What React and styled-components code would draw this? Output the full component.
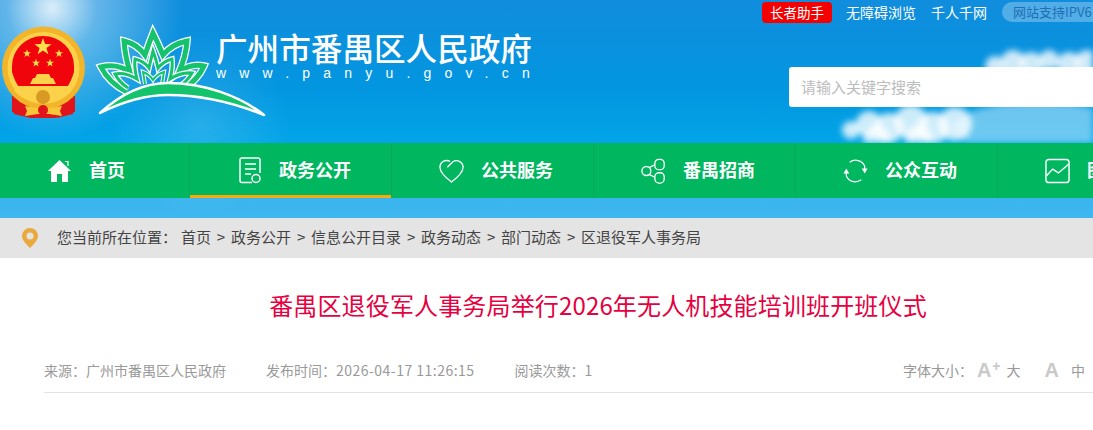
import React from "react";
import styled, { createGlobalStyle } from "styled-components";

const FONT = `"Noto Sans CJK SC", "Noto Sans", sans-serif`;

const GlobalStyle = createGlobalStyle`
  html, body {
    margin: 0;
    padding: 0;
    background: #fff;
    overflow: hidden;
  }
  body {
    font-family: ${FONT};
  }
`;

const Page = styled.div`
  width: 1093px;
  height: 430px;
  overflow: hidden;
`;

const Banner = styled.div`
  position: relative;
  height: 218px;
  overflow: hidden;
  background:
    radial-gradient(circle at 52px 8px, rgba(255, 255, 255, 0.85) 0, rgba(255, 255, 255, 0.35) 45px, rgba(255, 255, 255, 0) 130px),
    radial-gradient(circle at 200px 125px, rgba(255, 255, 255, 0.14) 0, rgba(255, 255, 255, 0) 90px),
    linear-gradient(180deg, #118ddd 0, #0296e0 90px, #03a5e8 143px, #3ab5ee 198px, #3fb6ef 218px);
`;

const Clouds = styled.svg`
  position: absolute;
  right: 0;
  top: 0;
  filter: blur(3px);
`;

const Head = styled.header`
  position: relative;
  display: flex;
  height: 143px;
`;

const Brand = styled.div`
  display: flex;
  align-items: flex-start;
  padding-top: 26px;
  flex: none;
  width: 762px;
  box-sizing: border-box;
`;

const TitleBlock = styled.div`
  margin-left: -51px;
  padding-top: 3px;
  color: #fff;
`;

const SiteName = styled.div`
  font-size: 31.6px;
  line-height: 36px;
  font-weight: 500;
  white-space: nowrap;
`;

const SiteUrl = styled.div`
  font-family: "Liberation Sans", sans-serif;
  font-size: 14px;
  line-height: 16px;
  letter-spacing: 13.2px;
  white-space: nowrap;
`;

const HeadRight = styled.div`
  flex: 1;
  display: flex;
  flex-direction: column;
  align-items: flex-start;
  padding-top: 2px;
  min-width: 0;
`;

const Tools = styled.div`
  display: flex;
  align-items: center;
  white-space: nowrap;
  height: 21px;
`;

const ElderButton = styled.span`
  width: 70px;
  height: 21px;
  line-height: 21px;
  text-align: center;
  background: #f40000;
  color: #fff;
  font-size: 13.5px;
  border-radius: 4px;
  margin-right: 14px;
`;

const ToolLink = styled.span`
  color: #fff;
  font-size: 14px;
  line-height: 21px;
  margin-right: 15px;
`;

const Ipv6 = styled.span`
  height: 20px;
  line-height: 20px;
  padding: 0 12px 0 11px;
  margin-top: -1px;
  background: rgba(255, 255, 255, 0.28);
  color: #1f6fb5;
  font-size: 13px;
  border-radius: 10px 0 0 10px;
`;

const SearchBox = styled.div`
  margin: 44px 0 0 27px;
  width: 320px;
  height: 40px;
  line-height: 40px;
  padding-left: 12px;
  box-sizing: border-box;
  background: #fff;
  border-radius: 3px;
  color: #bcbcbc;
  font-size: 15px;
`;

const Nav = styled.nav`
  position: relative;
  display: flex;
  height: 55px;
  background: #00b75f;
`;

const NavItem = styled.div`
  flex: none;
  box-sizing: border-box;
  width: ${({ $first }) => ($first ? "190px" : "202px")};
  display: flex;
  align-items: center;
  padding-left: 47px;
  border-right: 1px solid #0aa958;
  color: #fff;
  font-size: 18px;
  font-weight: 700;
  white-space: nowrap;
  ${({ $active }) => $active && `box-shadow: inset 0 -3px 0 #f7a90d;`}
`;

const NavIcon = styled.span`
  flex: none;
  width: 25px;
  height: 26px;
  margin-right: 17px;
  display: flex;
  align-items: center;
  justify-content: center;
`;

const NavLabel = styled.span`
  margin-top: -4px;
`;

const Crumb = styled.div`
  display: flex;
  align-items: center;
  height: 40px;
  padding-left: 22px;
  background: #e4e4e4;
  color: #444;
  font-size: 15px;
  white-space: nowrap;
`;

const PinIcon = styled.svg`
  flex: none;
  margin-right: 19px;
`;

const CrumbTrail = styled.div`
  display: flex;
  margin-top: -3px;
`;

const CrumbLabel = styled.span`
  margin-right: 4px;
`;

const CrumbSep = styled.span`
  width: 20px;
  text-align: center;
`;

const Article = styled.main`
  width: 1108px;
  margin-left: 44px;
`;

const Title = styled.h1`
  margin: 32px 0 0;
  font-size: 24px;
  line-height: 30px;
  font-weight: 400;
  letter-spacing: 0.15px;
  text-align: center;
  color: #e5003f;
  white-space: nowrap;
`;

const Meta = styled.div`
  display: flex;
  align-items: center;
  height: 40px;
  padding-bottom: 2px;
  margin-top: 30px;
  border-bottom: 1px solid #e4e4e4;
  color: #999;
  font-size: 14px;
  white-space: nowrap;
`;

const MetaItem = styled.span`
  margin-right: 40px;
`;

const MetaNumber = styled.span`
  letter-spacing: 0.48px;
`;

const FontSizer = styled.div`
  display: flex;
  align-items: center;
  margin-left: auto;
  margin-right: 67px;
`;

const SizeGlyph = styled.span`
  font-family: "Liberation Sans", sans-serif;
  font-weight: 700;
  font-size: 20px;
  line-height: 20px;
  color: #c9c9c9;
  margin: 0 ${({ $after }) => $after}px 0 ${({ $before }) => $before}px;
`;

const SizePlus = styled.sup`
  font-size: 14px;
  line-height: 0;
  margin-left: 1px;
  vertical-align: 6px;
`;

const Star = ({ cx, cy, r }) => {
  const pts = [];
  for (let i = 0; i < 10; i++) {
    const rad = i % 2 ? r * 0.4 : r;
    const a = (Math.PI / 5) * i - Math.PI / 2;
    pts.push(`${cx + rad * Math.cos(a)},${cy + rad * Math.sin(a)}`);
  }
  return <polygon points={pts.join(" ")} fill="#ffe14a" />;
};

const Emblem = () => (
  <svg width="95" height="95" viewBox="0 26 95 95" style={{ flex: "none" }}>
    <path d="M12 96 L12 112 L26 114 L30 118 L56 118 L60 114 L75 112 L75 96 Z" fill="#e0141a" />
    <circle cx="43.5" cy="68" r="41.5" fill="#f2b52a" />
    <circle cx="43.5" cy="68" r="36" fill="#fbd24a" />
    <path d="M12 66 A31 30 0 0 1 74 66 L74 72 C72 78 70 84 66 88 L20 88 C16 84 14 78 12 72 Z" fill="#f0050d" />
    <path d="M30 84 L33 78 H35 L37 74 H49 L51 78 H53 L56 84 Z" fill="#fbd24a" />
    <path d="M16 86 H71 L72 90 C66 98 60 100 43 100 C26 100 20 98 14 90 Z" fill="#fbd24a" />
    <path d="M12 98 C18 106 26 108 30 109 L30 118 L14 114 Z M75 98 C69 106 61 108 57 109 L57 118 L73 114 Z" fill="#e0141a" />
    <path d="M25 106 L38 108 H49 L62 106 L60 111 L62 116 L49 114 H38 L25 116 L27 111 Z" fill="#f6c53a" />
    <circle cx="43" cy="97" r="7" fill="#d99a24" />
    <circle cx="43" cy="110" r="5" fill="#e0141a" />
    <Star cx={43} cy={47} r={9} />
    <Star cx={27} cy={53.5} r={4.2} />
    <Star cx={59} cy={53.5} r={4.2} />
    <Star cx={36} cy={63} r={4.2} />
    <Star cx={50} cy={63} r={4.2} />
  </svg>
);

const LOTUS_GREEN = "#14c36b";

const PETALS = [
  {
    d: "M127 92 Q109 83 101 67 Q117 63 130 72 Q125 56 124 41 Q137 44 145 55 Q149 43 153 33 Q158 43 163 55 Q172 44 187 41 Q186 56 179 72 Q191 63 204 66 Q198 80 182 90",
    white: 7.5,
    green: 5,
  },
  {
    d: "M128 88 Q119 82 115 74 Q125 72 137 79 Q134 68 135 59 Q144 61 149 68 Q151 59 153 51 Q156 59 158 68 Q164 61 172 59 Q173 68 170 79 Q181 72 192 73 Q187 82 178 87",
    white: 5.5,
    green: 3,
  },
  {
    d: "M145 84 Q144 78 143 72 Q149 74 153 80 Q157 74 164 72 Q163 78 162 84",
    white: 4,
    green: 2,
  },
];

const Lotus = () => (
  <svg width="172" height="92" viewBox="95 26 172 92" style={{ flex: "none", overflow: "visible" }}>
    {PETALS.map((p) => (
      <g key={p.d} fill="none" strokeLinejoin="miter" strokeMiterlimit="6">
        <path d={p.d} stroke="#fff" strokeWidth={p.white} />
        <path d={p.d} stroke={LOTUS_GREEN} strokeWidth={p.green} />
      </g>
    ))}
    <path
      d="M100 113 C122 93 145 83 168 83 C204 83 240 96 264 115 C232 102 200 95 168 95 C145 95 122 102 100 113 Z"
      fill={LOTUS_GREEN}
      stroke="#fff"
      strokeWidth="2.5"
      strokeLinejoin="round"
    />
  </svg>
);

const HomeIcon = () => (
  <svg width="25" height="24" viewBox="0 0 25 24">
    <path d="M12.5 1 L24 12 L21 12 L21 23 L15 23 L15 15 L10 15 L10 23 L4 23 L4 12 L1 12 Z" fill="#fff" />
    <path d="M18 2.5 H21 V7" fill="none" stroke="#fff" strokeWidth="1.2" />
  </svg>
);

const DocIcon = () => (
  <svg width="24" height="27" viewBox="0 0 24 27" fill="none" stroke="#fff" strokeWidth="1.5">
    <path d="M14 25.5 H4 Q2 25.5 2 23.5 V3 Q2 1 4 1 H20 Q22 1 22 3 V16" />
    <path d="M7 7 H18 M7 12 H18 M7 17 H13" />
    <circle cx="18" cy="21.5" r="4" />
  </svg>
);

const HeartIcon = () => (
  <svg width="27" height="26" viewBox="0 0 27 26" fill="none" stroke="#fff" strokeWidth="1.4">
    <path d="M12 2.5 C6 0 1 3.5 1 9 C1 14 7 20 13.5 25 C20 20 26 14 26 9 C26 3.5 20 0 15 3 L9 9" />
  </svg>
);

const NodesIcon = () => (
  <svg width="28" height="28" viewBox="0 0 28 28" fill="none" stroke="#fff" strokeWidth="1.5">
    <circle cx="6" cy="14" r="5" />
    <rect x="15.5" y="1" width="10.5" height="11.5" rx="4.5" />
    <rect x="15.5" y="16" width="10.5" height="11.5" rx="4.5" />
    <path d="M9.5 10 L15.5 7 M9.5 18 L15.5 21" />
  </svg>
);

const CycleIcon = () => (
  <svg width="30" height="28" viewBox="0 0 30 28" fill="none" stroke="#fff" strokeWidth="1.5">
    <path d="M8 3.5 C14 -1 23 1 26 8 L26 13" />
    <path d="M22 24.5 C15 29 7 27 4 20 L4 15" />
    <path d="M22.5 11 H29.5 L26 17 Z M0.5 17 H7.5 L4 11 Z" fill="#fff" stroke="none" />
  </svg>
);

const ChartIcon = () => (
  <svg width="26" height="26" viewBox="0 0 26 26" fill="none" stroke="#fff" strokeWidth="1.5">
    <rect x="1" y="1" width="24" height="24" rx="3" />
    <path d="M1.5 18 L8 11 L14 15 L24.5 6" />
  </svg>
);

const Pin = () => (
  <PinIcon width="16" height="20" viewBox="0 0 16 20">
    <path
      fillRule="evenodd"
      d="M8 0 A8 8 0 0 1 16 8 C16 12 12 16 8 20 C4 16 0 12 0 8 A8 8 0 0 1 8 0 Z M8 4.5 A3.5 3.5 0 1 0 8 11.5 A3.5 3.5 0 1 0 8 4.5 Z"
      fill="#e9a93c"
    />
  </PinIcon>
);

// cloud puffs, in the coordinates of the 320px wide layer at the right edge
const PUFFS = [
  [222, 66, 10], [240, 62, 12], [258, 64, 12], [276, 60, 10], [296, 64, 12], [314, 62, 12],
  [78, 130, 9], [96, 124, 13], [116, 128, 15], [138, 122, 17], [160, 128, 16],
  [182, 124, 17], [104, 140, 14], [146, 140, 14],
];

const NAV = [
  { label: "首页", icon: <HomeIcon />, first: true },
  { label: "政务公开", icon: <DocIcon />, active: true },
  { label: "公共服务", icon: <HeartIcon /> },
  { label: "番禺招商", icon: <NodesIcon /> },
  { label: "公众互动", icon: <CycleIcon /> },
  { label: "图说番禺", icon: <ChartIcon /> },
];

const CRUMBS = ["首页", "政务公开", "信息公开目录", "政务动态", "部门动态", "区退役军人事务局"];

const App = () => (
  <Page>
    <GlobalStyle />
    <Banner>
      <Clouds width="320" height="143" viewBox="0 0 320 143">
        <ellipse cx="265" cy="128" rx="85" ry="26" fill="#fff" fillOpacity="0.42" />
        <g fill="#fff" fillOpacity="0.8">
          {PUFFS.map(([cx, cy, r]) => (
            <circle key={`${cx}-${cy}`} cx={cx} cy={cy} r={r} />
          ))}
        </g>
      </Clouds>
      <Head>
        <Brand>
          <Emblem />
          <Lotus />
          <TitleBlock>
            <SiteName>广州市番禺区人民政府</SiteName>
            <SiteUrl>www.panyu.gov.cn</SiteUrl>
          </TitleBlock>
        </Brand>
        <HeadRight>
          <Tools>
            <ElderButton>长者助手</ElderButton>
            <ToolLink>无障碍浏览</ToolLink>
            <ToolLink>千人千网</ToolLink>
            <Ipv6>网站支持IPV6</Ipv6>
          </Tools>
          <SearchBox>请输入关键字搜索</SearchBox>
        </HeadRight>
      </Head>
      <Nav>
        {NAV.map((item) => (
          <NavItem key={item.label} $first={item.first} $active={item.active}>
            <NavIcon>{item.icon}</NavIcon>
            <NavLabel>{item.label}</NavLabel>
          </NavItem>
        ))}
      </Nav>
    </Banner>
    <Crumb>
      <Pin />
      <CrumbTrail>
        <CrumbLabel>您当前所在位置：</CrumbLabel>
        {CRUMBS.map((c, i) => (
          <React.Fragment key={c}>
            {i > 0 && <CrumbSep>&gt;</CrumbSep>}
            <span>{c}</span>
          </React.Fragment>
        ))}
      </CrumbTrail>
    </Crumb>
    <Article>
      <Title>番禺区退役军人事务局举行2026年无人机技能培训班开班仪式</Title>
      <Meta>
        <MetaItem>来源：广州市番禺区人民政府</MetaItem>
        <MetaItem>发布时间：<MetaNumber>2026-04-17 11:26:15</MetaNumber></MetaItem>
        <MetaItem>阅读次数：1</MetaItem>
        <FontSizer>
          字体大小：
          <SizeGlyph $before={4} $after={6}>A<SizePlus>+</SizePlus></SizeGlyph>
          大
          <SizeGlyph $before={24} $after={12}>A</SizeGlyph>
          中
        </FontSizer>
      </Meta>
    </Article>
  </Page>
);

export default App;
